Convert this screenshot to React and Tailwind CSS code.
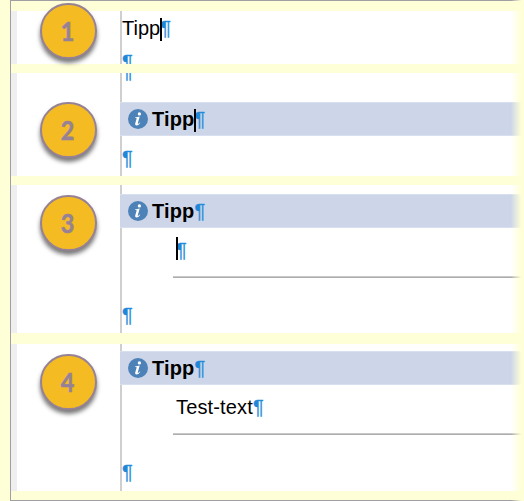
import React from 'react';

const Pilcrow = () => <span className="font-normal text-[#1f87d6] [-webkit-text-stroke:0.3px_#2a90dc]">¶</span>;

const Caret = () => <span className="absolute -bottom-[3px] -right-[2px] h-[23px] w-[2px] bg-black" />;

const Line = ({ className = '', children, caret }) => (
  <p className={`h-5 whitespace-nowrap text-[20px] leading-5 text-black ${className}`}>
    <span className="relative inline-block">
      {children}
      {caret && <Caret />}
    </span>
    <Pilcrow />
  </p>
);

const InfoIcon = () => (
  <svg viewBox="0 0 20 20" className="mr-[4px] h-5 w-5 shrink-0">
    <circle cx="10" cy="10" r="10" fill="#4d82b8" />
    <circle cx="11.4" cy="4.9" r="1.65" fill="#fff" />
    <path
      d="M7.1 8.4 L11.7 7.6 L9.8 14.2 Q9.6 15.1 10.3 14.8 Q11 14.4 11.8 13.4 L12.3 13.8 Q10.6 16.6 8.6 16.6 Q6.7 16.5 7.2 14.4 L8.6 9.8 Q8.8 9 8 9 L7 9 Z"
      fill="#fff"
    />
  </svg>
);

const TipHeader = ({ caret }) => (
  <div className="relative -ml-[2px] flex h-[34px] items-center border-y border-[#d8dfee] bg-[#cdd6e8] pl-[8px]">
    <InfoIcon />
    <Line caret={caret} className="font-bold tracking-[0.15px]">Tipp</Line>
  </div>
);

const Badge = ({ children, className }) => (
  <div
    className={`absolute left-[28.5px] flex h-[56px] w-[57px] items-center justify-center rounded-full border-2 border-[#978295] bg-[#f4bc22] font-['Lato',sans-serif] text-[26px] font-bold text-[#978295] shadow-[0_4px_4px_0_rgba(50,50,50,0.65)] ${className}`}
  >
    <span className="scale-x-90 [-webkit-text-stroke:0.6px_#978295]">{children}</span>
  </div>
);

const Panel = ({ number, className, badgeClass, children }) => (
  <section className={`relative flex border-l-[6px] border-[#efefef] bg-white ${className}`}>
    <div className="w-[103px] shrink-0" />
    <div className="flex-1 overflow-y-clip">
      <div className="flow-root h-full border-l-2 border-[#cfcfcf]">{children}</div>
    </div>
    <div className="absolute -left-[6px] top-0">
      <Badge className={badgeClass}>{number}</Badge>
    </div>
  </section>
);

const Rule = ({ className }) => (
  <hr className={`ml-[51px] h-[2px] border-0 border-t border-[#c8c8c8] bg-[#adadad] ${className}`} />
);

const App = () => (
  <main className="relative h-[501px] w-[524px] overflow-hidden bg-[#ffffd7] pl-[10px] font-['Liberation_Sans',Arial,sans-serif]">
    <div className="flex h-[501px] flex-col border-y border-l border-[#a09fa2] pt-[10px]">
      <Panel number="1" className="h-[53px]" badgeClass="-top-[8px]">
        <Line caret className="mt-[7px]">Tipp</Line>
        <Line className="mt-[14px]" />
      </Panel>

      <Panel number="2" className="mt-[9px] h-[103px]" badgeClass="top-[29px]">
        <Line className="-mt-[12px]" />
        <div className="mt-[21px]">
          <TipHeader caret />
        </div>
        <Line className="mt-[12px]" />
      </Panel>

      <Panel number="3" className="mt-[9px] h-[148px]" badgeClass="top-[10px]">
        <div className="pt-[9px]">
          <TipHeader />
        </div>
        <div className="mt-[12px] flex pl-[54px]">
          <Line caret />
        </div>
        <Rule className="mt-[16px]" />
        <Line className="mt-[27px]" />
      </Panel>

      <Panel number="4" className="mt-[11px] h-[147px]" badgeClass="top-[10px]">
        <div className="pt-[7px]">
          <TipHeader />
        </div>
        <Line className="ml-[54px] mt-[12px] tracking-[0.15px]">Test-text</Line>
        <Rule className="mt-[16px]" />
        <Line className="mt-[27px]" />
      </Panel>
    </div>

    {/* soft right edge over the panels */}
    <div className="absolute inset-y-0 right-0 w-[13px] bg-linear-to-r from-[#ffffd7]/0 to-[#ffffd7] to-80%" />
  </main>
);

export default App;
